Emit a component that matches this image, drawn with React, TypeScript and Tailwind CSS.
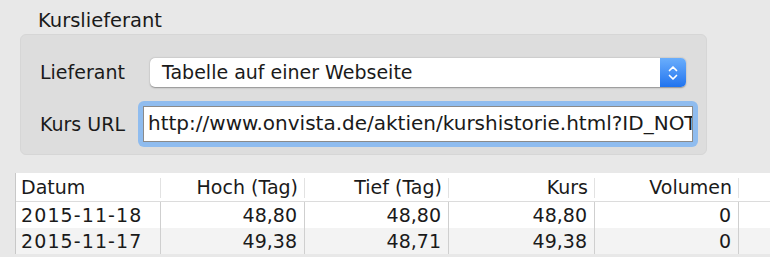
import React from "react";

const font = { fontFamily: '"DejaVu Sans", "Liberation Sans", sans-serif' };

const cols = [
  { label: "Datum", w: "w-[145px]", align: "text-left pl-[5px]" },
  { label: "Hoch (Tag)", w: "w-[144px]", align: "text-right pr-[7px]" },
  { label: "Tief (Tag)", w: "w-[144px]", align: "text-right pr-[7px]" },
  { label: "Kurs", w: "w-[146px]", align: "text-right pr-[7px]" },
  { label: "Volumen", w: "w-[144px]", align: "text-right pr-[7px]" },
];

const rows = [
  ["2015-11-18", "48,80", "48,80", "48,80", "0"],
  ["2015-11-17", "49,38", "48,71", "49,38", "0"],
];

export default function App() {
  return (
    <div className="w-[770px] h-[257px] overflow-hidden bg-[#e8e8e8] text-[#1a1a1a]" style={font}>
      <div className="pl-[38px] pt-[10px] h-[34px] text-[19.5px] leading-[22px]">Kurslieferant</div>
      <div className="ml-[20px] w-[687px] h-[121px] rounded-[6px] bg-[#dddddd] border border-[#d6d6d6] flex flex-col">
        <div className="flex items-center h-[29px] mt-[23px]">
          <div className="w-[129px] pl-[19px] text-[19px]">Lieferant</div>
          <div className="w-[536px] h-[29px] rounded-[5px] bg-white shadow-[0_0.5px_1.5px_rgba(0,0,0,0.35)] flex">
            <div className="flex-1 pl-[12px] text-[19px] leading-[29px]">Tabelle auf einer Webseite</div>
            <div className="w-[26px] h-[29px] rounded-r-[5px] bg-gradient-to-b from-[#6aaefc] to-[#1f73ee] flex items-center justify-center">
              <svg width="12" height="18" viewBox="0 0 12 18" fill="none" stroke="white" strokeWidth="1.7" strokeLinecap="round" strokeLinejoin="round">
                <path d="M2.5 6.5 L6 3 L9.5 6.5" />
                <path d="M2.5 11.5 L6 15 L9.5 11.5" />
              </svg>
            </div>
          </div>
        </div>
        <div className="flex items-center mt-[14px]">
          <div className="w-[117px] pl-[19px] text-[19px]">Kurs URL</div>
          <div className="w-[560px] h-[46px] rounded-[6px] bg-[#8fbcef] p-[5px]">
            <div className="h-full bg-white border border-[#8a8a8a] overflow-hidden whitespace-nowrap pl-[4px] text-[20px] leading-[32px]">
              http://www.onvista.de/aktien/kurshistorie.html?ID_NOTATION
            </div>
          </div>
        </div>
      </div>
      <div className="mt-[18px] ml-[15px] bg-white border-l border-[#c8c8c8]">
        <div className="flex h-[29px] border-b border-[#dcdcdc] text-[19px]">
          {cols.map((c, i) => (
            <div key={i} className={`${c.w} ${c.align} leading-[29px] relative`}>
              {c.label}
              <span className="absolute right-0 top-[5px] h-[20px] w-px bg-[#e2e2e2]" />
            </div>
          ))}
          <div className="flex-1" />
        </div>
        {rows.map((r, ri) => (
          <div key={ri} className={`flex h-[26px] text-[19px] ${ri % 2 === 1 ? "bg-[#f3f3f3]" : "bg-white"}`}>
            {r.map((v, i) => (
              <div
                key={i}
                className={`${cols[i].w} ${cols[i].align} leading-[26px] border-r border-[#cfcfcf] ${i === 0 ? "tracking-[1.1px]" : ""}`}
              >
                {v}
              </div>
            ))}
            <div className="flex-1" />
          </div>
        ))}
      </div>
    </div>
  );
}
